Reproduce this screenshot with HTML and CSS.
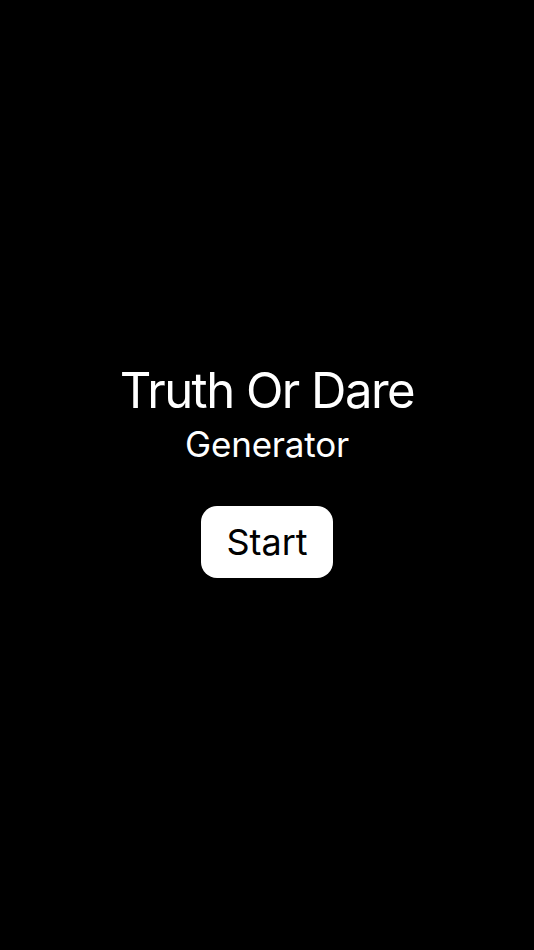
FILE: index.html
```html
<!DOCTYPE html>
<html>
<head>
<meta charset="utf-8">
<link rel="stylesheet" href="styles.css">
</head>
<body>
<main class="screen">
  <h1 class="title">Truth Or Dare</h1>
  <h2 class="subtitle">Generator</h2>
  <button class="start">Start</button>
</main>
</body>
</html>
```
FILE: styles.css
```css
html, body {
  margin: 0;
  padding: 0;
  background: #000;
}
.screen {
  box-sizing: border-box;
  width: 534px;
  height: 950px;
  padding-top: 365px;
  display: flex;
  flex-direction: column;
  align-items: center;
  font-family: Inter, "Noto Sans", sans-serif;
  color: #fff;
}
.title {
  margin: 0;
  font-size: 49px;
  font-weight: 400;
  line-height: 52px;
  letter-spacing: -1.5px;
}
.subtitle {
  margin: 7px 0 0;
  font-size: 35px;
  font-weight: 400;
  line-height: 40px;
  letter-spacing: -0.2px;
}
.start {
  margin-top: 42px;
  width: 132px;
  height: 72px;
  border: none;
  border-radius: 16px;
  background: #fff;
  color: #000;
  font-family: Inter, "Noto Sans", sans-serif;
  font-size: 36px;
  font-weight: 400;
  padding: 0;
}
```
